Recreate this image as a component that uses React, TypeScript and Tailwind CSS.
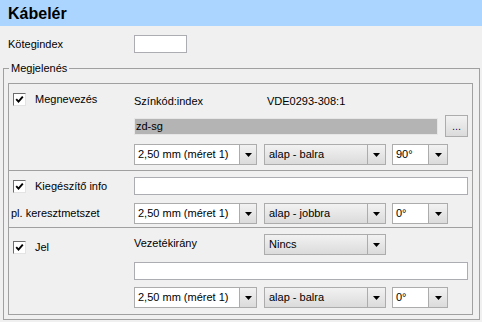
import React from "react";

function Arrow() {
  return (
    <svg width="7" height="4" viewBox="0 0 7 4">
      <path d="M0 0h7L3.5 4z" fill="#000" />
    </svg>
  );
}

function Check() {
  return (
    <div className="w-[13px] h-[13px] shrink-0 bg-white border border-t-[#6d6d6d] border-l-[#6d6d6d] border-r-[#e3e3e3] border-b-[#e3e3e3] flex items-center justify-center">
      <svg width="9" height="9" viewBox="0 0 9 9">
        <path d="M1.2 4.2l2.3 2.4L7.8 1.6" stroke="#000" strokeWidth="1.9" fill="none" />
      </svg>
    </div>
  );
}

// white editable combo with a dropdown button on the right
function EditCombo({ text, w, btn }: { text: string; w: string; btn: string }) {
  return (
    <div className={`${w} h-[21px] flex border border-[#acacac] bg-white`}>
      <div className="flex-1 pl-[3px] flex items-center whitespace-nowrap">{text}</div>
      <div className={`${btn} border-l border-[#acacac] bg-linear-to-b from-[#f2f2f2] to-[#dbdbdb] flex items-center justify-center`}>
        <Arrow />
      </div>
    </div>
  );
}

// drop-down list styled as a button
function ListCombo({ text }: { text: string }) {
  return (
    <div className="w-[122px] h-[21px] flex border border-[#acacac] bg-linear-to-b from-[#f2f2f2] to-[#dbdbdb]">
      <div className="flex-1 pl-[4px] flex items-center">{text}</div>
      <div className="w-[18px] border-l border-[#acacac] flex items-center justify-center">
        <Arrow />
      </div>
    </div>
  );
}

function Combos({ align, angle }: { align: string; angle: string }) {
  return (
    <div className="flex">
      <EditCombo text="2,50 mm (méret 1)" w="w-[123px]" btn="w-[17px]" />
      <div className="ml-[7px]">
        <ListCombo text={align} />
      </div>
      <div className="ml-[6px]">
        <EditCombo text={angle} w="w-[56px]" btn="w-[19px]" />
      </div>
    </div>
  );
}

export default function App() {
  return (
    <div className="w-[482px] h-[322px] overflow-hidden bg-[#f0f0f0] text-black text-[11px] leading-[13px] font-['Liberation_Sans',Arial,sans-serif]">
      {/* title bar */}
      <div className="h-[26px] bg-[#abd5ff] pl-[8px] flex items-center font-bold text-[16px]">Kábelér</div>

      {/* Kötegindex */}
      <div className="mt-[9px] h-[18px] flex items-center pl-[8px]">
        <div className="w-[126px]">Kötegindex</div>
        <div className="w-[53px] h-[18px] bg-white border border-[#abadb3]" />
      </div>

      <div className="pl-[3px] pr-[2px] mt-[9px]">
        <fieldset className="border border-[#a0a0a0] pl-[4px] pr-[6px] pb-[4px]">
          <legend className="ml-[1px] px-[2px] leading-[13px]">Megjelenés</legend>

          <div className="mt-[8px] border border-[#a0a0a0] divide-y divide-[#a0a0a0]">
            {/* Megnevezés */}
            <div className="h-[87px] pt-[9px]">
              <div className="flex items-start">
                <div className="w-[125px] pl-[4px] flex items-center gap-[9px] h-[13px]">
                  <Check />
                  <span className="-mt-[1px]">Megnevezés</span>
                </div>
                <div className="flex pt-[2px]">
                  <span className="w-[133px]">Színkód:index</span>
                  <span>VDE0293-308:1</span>
                </div>
              </div>
              <div className="flex items-center h-[22px] mt-[7px] pl-[125px]">
                <div className="w-[304px] h-[17px] bg-[#b4b4b4] border border-[#e6e6e6] pl-[1px] flex items-center">zd-sg</div>
                <div className="ml-[7px] w-[23px] h-[22px] border border-[#acacac] bg-linear-to-b from-[#f2f2f2] to-[#dbdbdb] flex items-end justify-center pb-[3px] text-[#300060]">...</div>
              </div>
              <div className="mt-[7px] pl-[125px]">
                <Combos align="alap - balra" angle="90°" />
              </div>
            </div>

            {/* Kiegészítő info */}
            <div className="h-[57px] pt-[6px]">
              <div className="flex items-center h-[18px]">
                <div className="w-[125px] pl-[4px] flex items-center gap-[9px]">
                  <Check />
                  <span>Kiegészítő info</span>
                </div>
                <div className="w-[334px] h-[18px] bg-white border border-[#abadb3]" />
              </div>
              <div className="flex items-center mt-[8px]">
                <div className="w-[125px] pl-[2px]">pl. keresztmetszet</div>
                <Combos align="alap - jobbra" angle="0°" />
              </div>
            </div>

            {/* Jel */}
            <div className="h-[86px] pt-[6px]">
              <div className="flex items-start h-[21px]">
                <div className="w-[125px] pl-[4px] pt-[7px] flex items-center gap-[9px]">
                  <Check />
                  <span>Jel</span>
                </div>
                <div className="w-[130px] h-[21px] flex items-center -mt-[1px]">Vezetékirány</div>
                <ListCombo text="Nincs" />
              </div>
              <div className="mt-[7px] pl-[125px]">
                <div className="w-[334px] h-[18px] bg-white border border-[#abadb3]" />
              </div>
              <div className="mt-[7px] pl-[125px]">
                <Combos align="alap - balra" angle="0°" />
              </div>
            </div>
          </div>
        </fieldset>
      </div>
    </div>
  );
}
